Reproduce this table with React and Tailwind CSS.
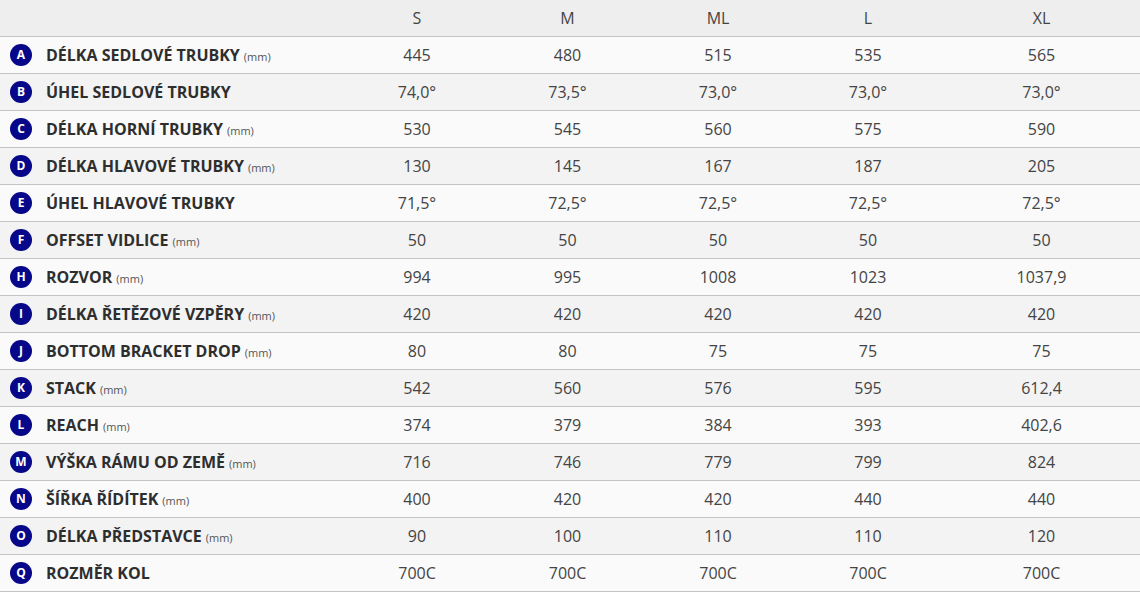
import React from 'react';

const sizes = ['S', 'M', 'ML', 'L', 'XL'];

const rows = [
  { key: 'A', label: 'DÉLKA SEDLOVÉ TRUBKY', mm: true, values: ['445', '480', '515', '535', '565'] },
  { key: 'B', label: 'ÚHEL SEDLOVÉ TRUBKY', mm: false, values: ['74,0°', '73,5°', '73,0°', '73,0°', '73,0°'] },
  { key: 'C', label: 'DÉLKA HORNÍ TRUBKY', mm: true, values: ['530', '545', '560', '575', '590'] },
  { key: 'D', label: 'DÉLKA HLAVOVÉ TRUBKY', mm: true, values: ['130', '145', '167', '187', '205'] },
  { key: 'E', label: 'ÚHEL HLAVOVÉ TRUBKY', mm: false, values: ['71,5°', '72,5°', '72,5°', '72,5°', '72,5°'] },
  { key: 'F', label: 'OFFSET VIDLICE', mm: true, values: ['50', '50', '50', '50', '50'] },
  { key: 'H', label: 'ROZVOR', mm: true, values: ['994', '995', '1008', '1023', '1037,9'] },
  { key: 'I', label: 'DÉLKA ŘETĚZOVÉ VZPĚRY', mm: true, values: ['420', '420', '420', '420', '420'] },
  { key: 'J', label: 'BOTTOM BRACKET DROP', mm: true, values: ['80', '80', '75', '75', '75'] },
  { key: 'K', label: 'STACK', mm: true, values: ['542', '560', '576', '595', '612,4'] },
  { key: 'L', label: 'REACH', mm: true, values: ['374', '379', '384', '393', '402,6'] },
  { key: 'M', label: 'VÝŠKA RÁMU OD ZEMĚ', mm: true, values: ['716', '746', '779', '799', '824'] },
  { key: 'N', label: 'ŠÍŘKA ŘÍDÍTEK', mm: true, values: ['400', '420', '420', '440', '440'] },
  { key: 'O', label: 'DÉLKA PŘEDSTAVCE', mm: true, values: ['90', '100', '110', '110', '120'] },
  { key: 'Q', label: 'ROZMĚR KOL', mm: false, values: ['700C', '700C', '700C', '700C', '700C'] },
];

const cols = 'grid grid-cols-[342px_150px_151px_150px_150px_1fr]';

export default function App() {
  return (
    <div className="w-[1140px] h-[592px] overflow-hidden bg-white text-[#333] font-['Open_Sans',sans-serif]">
      {/* Header */}
      <div className={`${cols} h-[37px] bg-[#eeeeee] border-b border-[#c4c4c4] items-center`}>
        <div />
        {sizes.map((s) => (
          <div key={s} className="text-center text-[16px] text-[#444]">{s}</div>
        ))}
      </div>

      {rows.map((r, i) => (
        <div
          key={r.key}
          className={`${cols} h-[37px] border-b border-[#c4c4c4] items-center ${i % 2 === 0 ? 'bg-[#fafafa]' : 'bg-[#f3f3f3]'}`}
        >
          <div className="flex items-center pl-[10px] -mt-px">
            <span className="w-[22px] h-[22px] rounded-full bg-[#07078a] text-white text-[12px] leading-none font-bold flex items-center justify-center shrink-0">
              {r.key}
            </span>
            <span className="ml-[14px] text-[16px] font-bold text-[#2e2e2e] whitespace-nowrap">
              {r.label}
              {r.mm && <span className="ml-1 text-[11px] font-normal text-[#555]">(mm)</span>}
            </span>
          </div>
          {r.values.map((v, j) => (
            <div key={j} className="text-center text-[16px] text-[#444]">{v}</div>
          ))}
        </div>
      ))}
    </div>
  );
}
